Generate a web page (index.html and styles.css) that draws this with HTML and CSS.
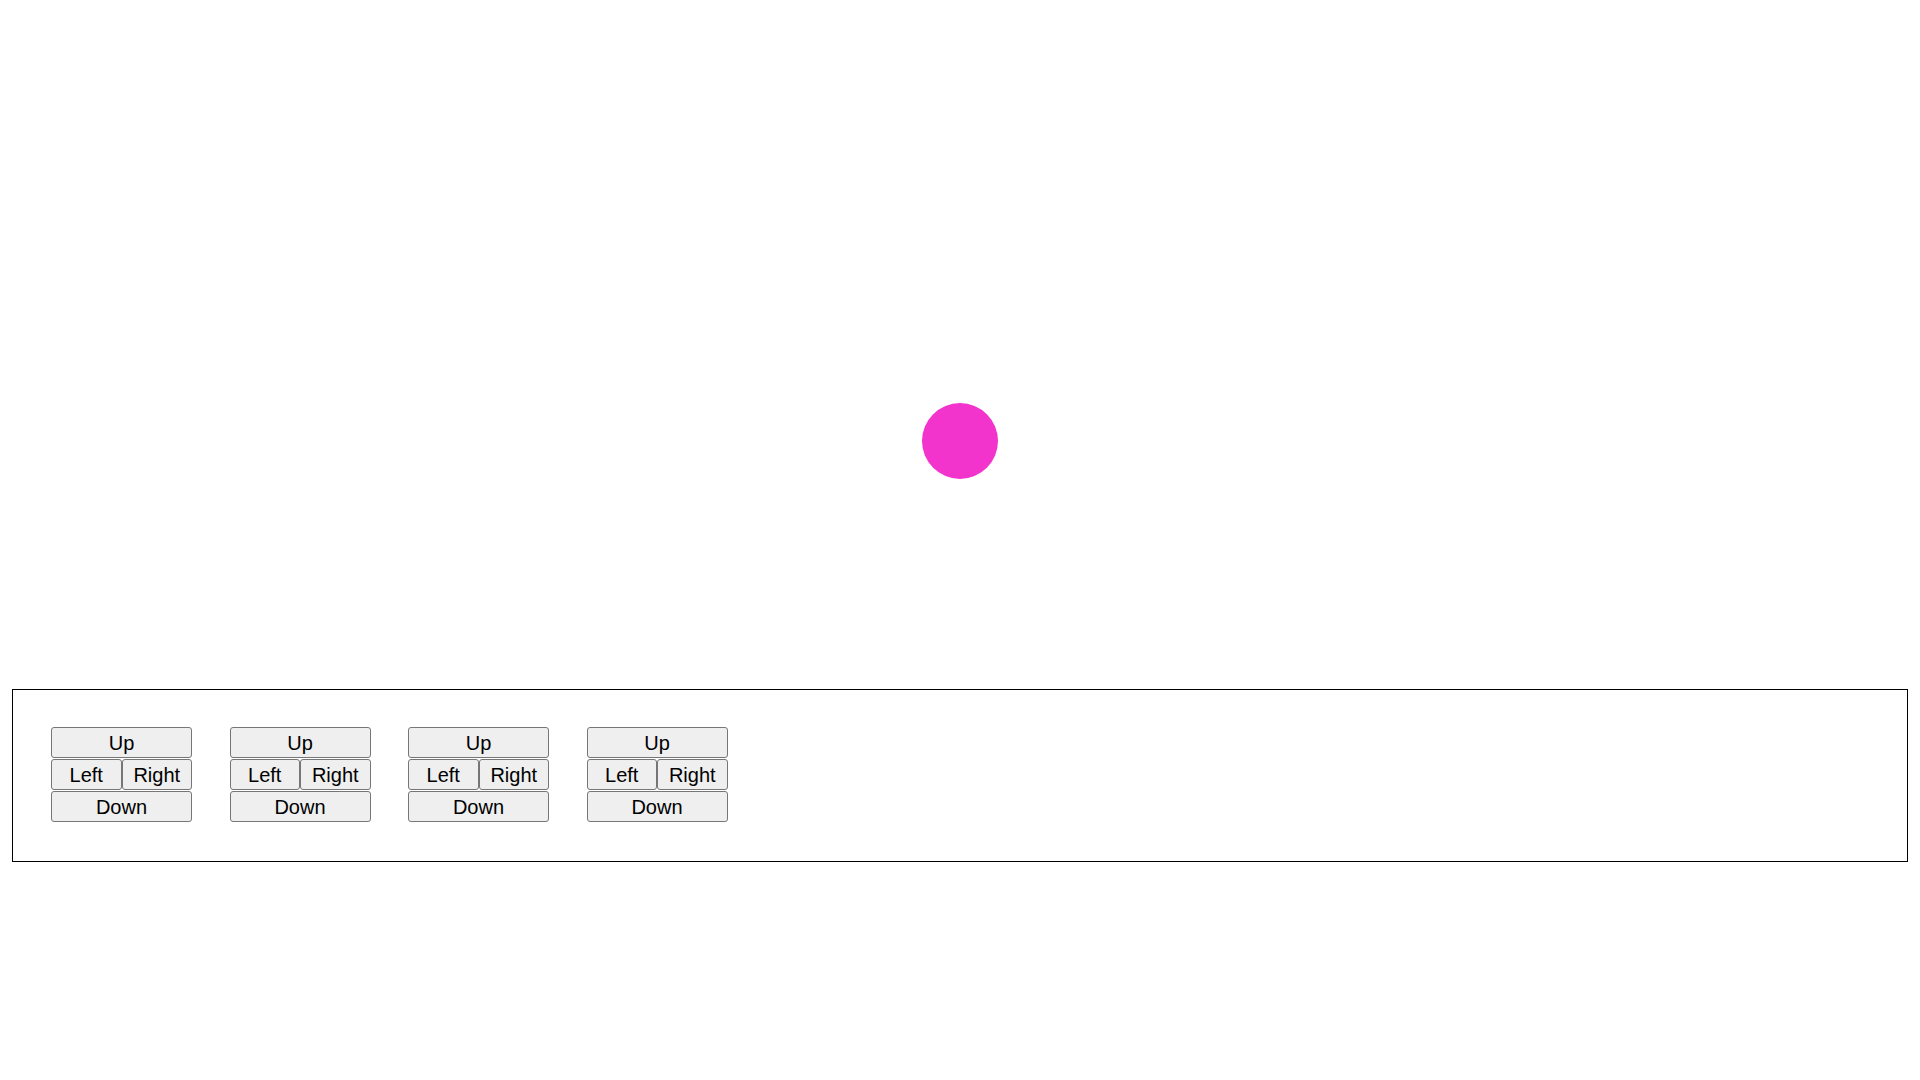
FILE: index.html
```html
<!DOCTYPE html>
<html>
<head>
<meta charset="utf-8">
<link rel="stylesheet" href="styles.css">
</head>
<body>
<div class="stage">
  <div class="ball"></div>
</div>
<div class="panel">
  <div class="pad">
    <button class="btn full">Up</button>
    <div class="row"><button class="btn">Left</button><button class="btn">Right</button></div>
    <button class="btn full">Down</button>
  </div>
  <div class="pad">
    <button class="btn full">Up</button>
    <div class="row"><button class="btn">Left</button><button class="btn">Right</button></div>
    <button class="btn full">Down</button>
  </div>
  <div class="pad">
    <button class="btn full">Up</button>
    <div class="row"><button class="btn">Left</button><button class="btn">Right</button></div>
    <button class="btn full">Down</button>
  </div>
  <div class="pad">
    <button class="btn full">Up</button>
    <div class="row"><button class="btn">Left</button><button class="btn">Right</button></div>
    <button class="btn full">Down</button>
  </div>
</div>
</body>
</html>
```
FILE: styles.css
```css
html, body {
  margin: 0;
  padding: 0;
  background: #fff;
  font-family: "Liberation Sans", Arial, sans-serif;
}
.stage {
  position: relative;
  height: 689px;
}
.ball {
  position: absolute;
  left: 922px;
  top: 403px;
  width: 76px;
  height: 76px;
  border-radius: 50%;
  background: #f233cc;
}
.panel {
  margin: 0 12px;
  border: 1px solid #000;
  padding: 37px 38px 39px 38px;
  display: flex;
  gap: 37.5px;
}
.pad {
  width: 141px;
  display: flex;
  flex-direction: column;
  gap: 1px;
}
.row {
  display: flex;
  gap: 0;
}
.row .btn {
  flex: 1 1 0;
}
.btn {
  box-sizing: border-box;
  height: 31px;
  margin: 0;
  padding: 0;
  border: 1px solid #767676;
  border-radius: 3px;
  background: #efefef;
  color: #000;
  font-family: "Liberation Sans", Arial, sans-serif;
  font-size: 20px;
  line-height: 1;
}
.full {
  width: 100%;
}
```
